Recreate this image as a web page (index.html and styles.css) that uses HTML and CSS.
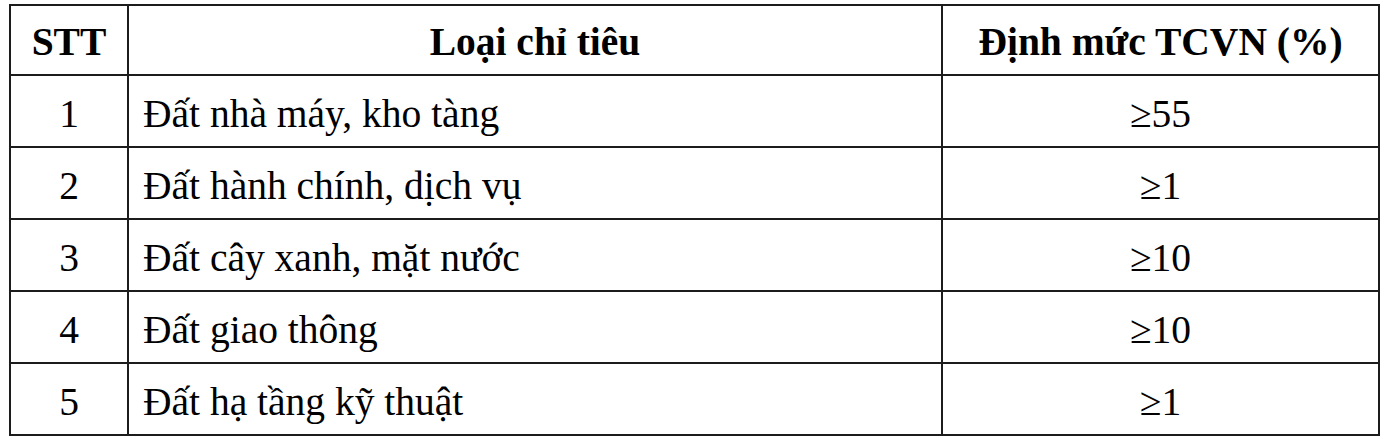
FILE: index.html
```html
<!DOCTYPE html>
<html lang="vi">
<head>
<meta charset="utf-8">
<title>Định mức TCVN</title>
<link rel="stylesheet" href="styles.css">
</head>
<body>
<div class="wrap">
<table class="norms">
  <colgroup>
    <col class="c-stt">
    <col class="c-name">
    <col class="c-val">
  </colgroup>
  <thead>
    <tr>
      <th>STT</th>
      <th>Loại chỉ tiêu</th>
      <th>Định mức TCVN (%)</th>
    </tr>
  </thead>
  <tbody>
    <tr><td class="num">1</td><td class="name">Đất nhà máy, kho tàng</td><td class="num">≥55</td></tr>
    <tr><td class="num">2</td><td class="name">Đất hành chính, dịch vụ</td><td class="num">≥1</td></tr>
    <tr><td class="num">3</td><td class="name">Đất cây xanh, mặt nước</td><td class="num">≥10</td></tr>
    <tr><td class="num">4</td><td class="name">Đất giao thông</td><td class="num">≥10</td></tr>
    <tr><td class="num">5</td><td class="name">Đất hạ tầng kỹ thuật</td><td class="num">≥1</td></tr>
  </tbody>
</table>
</div>
</body>
</html>
```
FILE: styles.css
```css
html, body {
  margin: 0;
  padding: 0;
  background: #ffffff;
}
.wrap {
  padding: 4px 0 0 9px;
}
.norms {
  border-collapse: collapse;
  table-layout: fixed;
  width: 1369px;
  font-family: "Liberation Serif", "Times New Roman", serif;
  font-size: 39.5px;
  color: #000;
}
.c-stt { width: 118px; }
.c-name { width: 814px; }
.c-val { width: 437px; }
.norms th,
.norms td {
  border: 2px solid #1c1c1c;
  padding: 17px 14px 9px;
  line-height: 42px;
  vertical-align: top;
  white-space: nowrap;
}
.norms th {
  font-weight: bold;
  text-align: center;
  height: 42px;
  padding-top: 15px;
  padding-bottom: 11px;
}
.norms td {
  height: 44px;
}
.norms td.num { text-align: center; }
.norms td.name { text-align: left; }
```
